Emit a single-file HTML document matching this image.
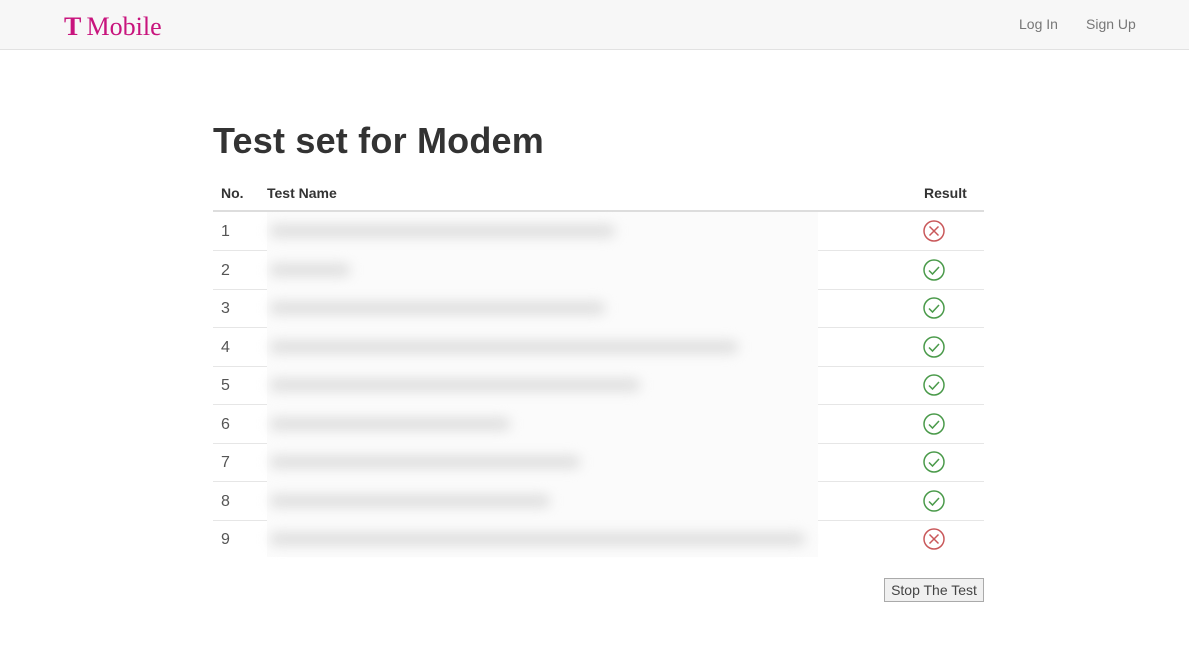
<!DOCTYPE html>
<html><head><meta charset="utf-8"><style>
body{margin:0;width:1189px;height:652px;background:#fff;font-family:"Liberation Sans",sans-serif;position:relative;overflow:hidden}
.hdr{position:absolute;left:0;top:0;width:1189px;height:49px;background:#f7f7f7;border-bottom:1px solid #e2e2e2}
.logo{position:absolute;left:64px;top:12px;font-family:"Liberation Serif",serif;font-size:26px;color:#c8147d;letter-spacing:0px}
.nav{position:absolute;top:16px;font-size:14px;color:#777}
h1{position:absolute;left:213px;top:120px;margin:0;font-size:36px;font-weight:bold;color:#333;letter-spacing:0.2px}
.th{position:absolute;top:185px;font-size:14px;font-weight:bold;color:#333}
.hl{position:absolute;left:213px;top:210px;width:771px;height:2px;background:#ddd}
.blurbg{position:absolute;left:267px;top:212px;width:551px;height:345px;background:#fbfbfb}
.num{position:absolute;left:221px;font-size:16px;color:#555}
.bl{position:absolute;left:270px;height:12px;border-radius:6px;background:#dcdcdc;filter:blur(6px)}
.ln{position:absolute;height:1px;background:#e6e6e6}
.ic{position:absolute;left:923px}
.btn{position:absolute;left:884px;top:578px;width:98px;height:22px;border:1px solid #aaa;background:#f0f0f0;font-size:14px;color:#444;text-align:center;line-height:22px}
</style></head><body>
<div class="hdr"><div class="logo"><b>T</b>&#8201;Mobile</div>
<div class="nav" style="left:1019px">Log In</div><div class="nav" style="left:1086px">Sign Up</div></div>
<h1>Test set for Modem</h1>
<div class="th" style="left:221px">No.</div><div class="th" style="left:267px">Test Name</div><div class="th" style="left:924px">Result</div>
<div class="hl"></div>
<div class="blurbg"></div>
<div id="rows"></div>
<div class="btn">Stop The Test</div>
<script>
var ends=[615,350,605,738,640,510,580,550,805],res=[0,1,1,1,1,1,1,1,0],h='';
for(var i=0;i<9;i++){var c=231+38.5*i;
h+='<div class="num" style="top:'+(c-8)+'px">'+(i+1)+'</div>';
h+='<div class="bl" style="top:'+(c-6)+'px;width:'+(ends[i]-270)+'px"></div>';
var svg=res[i]?'<circle cx="11" cy="11" r="10" fill="none" stroke="#4a9a4a" stroke-width="1.5"/><path d="M6 11.5l3.5 3.5 6.5-7" fill="none" stroke="#4a9a4a" stroke-width="1.5"/>':'<circle cx="11" cy="11" r="10" fill="none" stroke="#c9585a" stroke-width="1.5"/><path d="M6.5 6.5l9 9M15.5 6.5l-9 9" stroke="#c9585a" stroke-width="1.5"/>';
h+='<svg class="ic" style="top:'+(c-11)+'px" width="22" height="22">'+svg+'</svg>';
if(i<8){var y=Math.round(c+19);h+='<div class="ln" style="left:213px;width:54px;top:'+y+'px"></div><div class="ln" style="left:818px;width:166px;top:'+y+'px"></div>';}}
document.getElementById('rows').innerHTML=h;
</script>
</body></html>
